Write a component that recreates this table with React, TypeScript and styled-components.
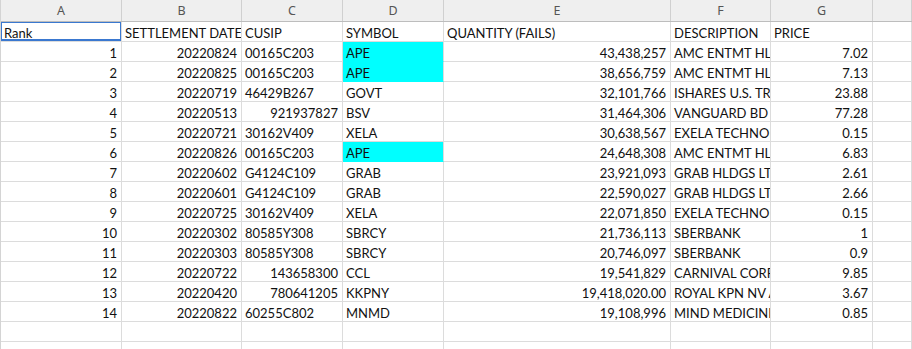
import * as React from 'react';
import styled, { createGlobalStyle, css } from 'styled-components';

const GlobalStyle = createGlobalStyle`
  html, body {
    margin: 0;
    padding: 0;
    background: #ffffff;
    overflow: hidden;
  }
`;

const COLS = '121px 120px 101px 101px 227px 100px 102px 1fr';

const Sheet = styled.div`
  width: 912px;
  height: 349px;
  overflow: hidden;
  border-left: 1px solid #d4d4d4;
  box-sizing: border-box;
  font-family: Lato, "Liberation Sans", sans-serif;
`;

const HeaderRow = styled.div`
  display: grid;
  grid-template-columns: ${COLS};
  height: 22px;
  background: #efefef;
  border-bottom: 1px solid #bdbdbd;
  box-sizing: border-box;
`;

const ColLetter = styled.div`
  border-right: 1px solid #d0d0d0;
  font-family: "Noto Sans", "Open Sans", sans-serif;
  font-size: 12.5px;
  color: #555555;
  display: flex;
  align-items: center;
  justify-content: center;
`;

const Row = styled.div`
  display: grid;
  grid-template-columns: ${COLS};
  height: 20px;
`;

const Cell = styled.div<{ $align?: 'left' | 'right'; $fill?: string }>`
  position: relative;
  box-sizing: border-box;
  border-right: 1px solid #dcdcdc;
  border-bottom: 1px solid #dcdcdc;
  font-size: 13px;
  line-height: 20px;
  color: #111111;
  padding: 1px 4px 0 3px;
  white-space: nowrap;
  overflow: hidden;
  text-align: ${p => p.$align ?? 'left'};
  ${p => p.$fill && css`
    background: ${p.$fill};
    border-bottom-color: ${p.$fill};
  `}
`;

const Selection = styled.div`
  position: absolute;
  inset: -1px -1px 0 -1px;
  border: 2px solid #3a78d0;
  pointer-events: none;
`;

type Item = [string, string, string, string, string, string, string];

const data: Item[] = [
  ['1', '20220824', '00165C203', 'APE', '43,438,257', 'AMC ENTMT HLDGS INC', '7.02'],
  ['2', '20220825', '00165C203', 'APE', '38,656,759', 'AMC ENTMT HLDGS INC', '7.13'],
  ['3', '20220719', '46429B267', 'GOVT', '32,101,766', 'ISHARES U.S. TREASURY', '23.88'],
  ['4', '20220513', '921937827', 'BSV', '31,464,306', 'VANGUARD BD INDEX FD', '77.28'],
  ['5', '20220721', '30162V409', 'XELA', '30,638,567', 'EXELA TECHNOLOGIES', '0.15'],
  ['6', '20220826', '00165C203', 'APE', '24,648,308', 'AMC ENTMT HLDGS INC', '6.83'],
  ['7', '20220602', 'G4124C109', 'GRAB', '23,921,093', 'GRAB HLDGS LTD', '2.61'],
  ['8', '20220601', 'G4124C109', 'GRAB', '22,590,027', 'GRAB HLDGS LTD', '2.66'],
  ['9', '20220725', '30162V409', 'XELA', '22,071,850', 'EXELA TECHNOLOGIES', '0.15'],
  ['10', '20220302', '80585Y308', 'SBRCY', '21,736,113', 'SBERBANK', '1'],
  ['11', '20220303', '80585Y308', 'SBRCY', '20,746,097', 'SBERBANK', '0.9'],
  ['12', '20220722', '143658300', 'CCL', '19,541,829', 'CARNIVAL CORP', '9.85'],
  ['13', '20220420', '780641205', 'KKPNY', '19,418,020.00', 'ROYAL KPN NV ADR', '3.67'],
  ['14', '20220822', '60255C802', 'MNMD', '19,108,996', 'MIND MEDICINE INC', '0.85'],
];

const letters = ['A', 'B', 'C', 'D', 'E', 'F', 'G', ''];
const isNumeric = (s: string) => /^[\d,.]+$/.test(s);

const App: React.FC = () => (
  <>
    <GlobalStyle />
    <Sheet>
      <HeaderRow>
        {letters.map((l, i) => <ColLetter key={i}>{l}</ColLetter>)}
      </HeaderRow>
      <Row>
        <Cell>
          Rank
          <Selection />
        </Cell>
        <Cell>SETTLEMENT DATE</Cell>
        <Cell>CUSIP</Cell>
        <Cell>SYMBOL</Cell>
        <Cell>QUANTITY (FAILS)</Cell>
        <Cell>DESCRIPTION</Cell>
        <Cell>PRICE</Cell>
        <Cell />
      </Row>
      {data.map(r => (
        <Row key={r[0]}>
          <Cell $align="right">{r[0]}</Cell>
          <Cell $align="right">{r[1]}</Cell>
          <Cell $align={isNumeric(r[2]) ? 'right' : 'left'}>{r[2]}</Cell>
          <Cell $fill={r[3] === 'APE' ? '#00ffff' : undefined}>{r[3]}</Cell>
          <Cell $align="right">{r[4]}</Cell>
          <Cell>{r[5]}</Cell>
          <Cell $align="right">{r[6]}</Cell>
          <Cell />
        </Row>
      ))}
      <Row>{letters.map((_, i) => <Cell key={i} />)}</Row>
      <Row>{letters.map((_, i) => <Cell key={i} />)}</Row>
    </Sheet>
  </>
);

export default App;
